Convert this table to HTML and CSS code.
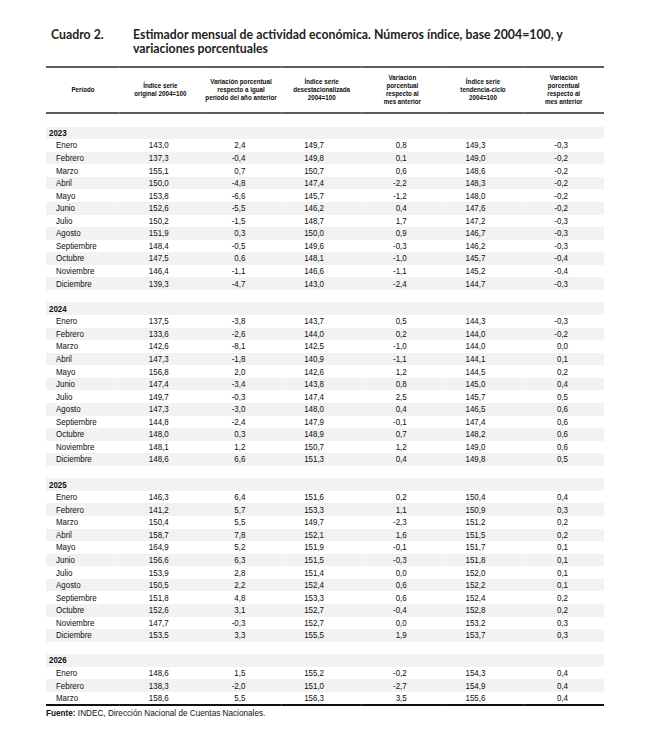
FILE: index.html
```html
<!DOCTYPE html>
<html lang="es">
<head>
    <meta charset="UTF-8">
    <meta name="viewport" content="width=device-width, initial-scale=1.0">
    <title>Cuadro 2 - EMAE</title>
    <link rel="stylesheet" href="styles.css">
</head>
<body>
    <div class="page">
        <div class="caption">
            <span class="caption-num">Cuadro 2.</span>
            <span class="caption-text">Estimador mensual de actividad económica. Números índice, base 2004=100, y<br>variaciones porcentuales</span>
        </div>

        <!-- the table is laid out wide and squeezed to mimic a narrow face -->
        <table class="emae">
            <colgroup>
                <col class="c-periodo">
                <col><col><col><col><col><col>
            </colgroup>
            <thead>
                <tr>
                    <th>Período</th>
                    <th>Índice serie<br>original 2004=100</th>
                    <th>Variación porcentual<br>respecto a igual<br>período del año anterior</th>
                    <th>Índice serie<br>desestacionalizada<br>2004=100</th>
                    <th>Variación<br>porcentual<br>respecto al<br>mes anterior</th>
                    <th>Índice serie<br>tendencia-ciclo<br>2004=100</th>
                    <th>Variación<br>porcentual<br>respecto al<br>mes anterior</th>
                </tr>
            </thead>
            <tbody>
                <!-- 2023 -->
                <tr class="spacer"><td colspan="7"></td></tr>
                <tr class="year"><td colspan="7">2023</td></tr>
                <tr><td class="mes">Enero</td><td class="num">143,0</td><td class="num">2,4</td><td class="num">149,7</td><td class="num">0,8</td><td class="num">149,3</td><td class="num">-0,3</td></tr>
                <tr class="alt"><td class="mes">Febrero</td><td class="num">137,3</td><td class="num">-0,4</td><td class="num">149,8</td><td class="num">0,1</td><td class="num">149,0</td><td class="num">-0,2</td></tr>
                <tr><td class="mes">Marzo</td><td class="num">155,1</td><td class="num">0,7</td><td class="num">150,7</td><td class="num">0,6</td><td class="num">148,6</td><td class="num">-0,2</td></tr>
                <tr class="alt"><td class="mes">Abril</td><td class="num">150,0</td><td class="num">-4,8</td><td class="num">147,4</td><td class="num">-2,2</td><td class="num">148,3</td><td class="num">-0,2</td></tr>
                <tr><td class="mes">Mayo</td><td class="num">153,8</td><td class="num">-6,6</td><td class="num">145,7</td><td class="num">-1,2</td><td class="num">148,0</td><td class="num">-0,2</td></tr>
                <tr class="alt"><td class="mes">Junio</td><td class="num">152,6</td><td class="num">-5,5</td><td class="num">146,2</td><td class="num">0,4</td><td class="num">147,6</td><td class="num">-0,2</td></tr>
                <tr><td class="mes">Julio</td><td class="num">150,2</td><td class="num">-1,5</td><td class="num">148,7</td><td class="num">1,7</td><td class="num">147,2</td><td class="num">-0,3</td></tr>
                <tr class="alt"><td class="mes">Agosto</td><td class="num">151,9</td><td class="num">0,3</td><td class="num">150,0</td><td class="num">0,9</td><td class="num">146,7</td><td class="num">-0,3</td></tr>
                <tr><td class="mes">Septiembre</td><td class="num">148,4</td><td class="num">-0,5</td><td class="num">149,6</td><td class="num">-0,3</td><td class="num">146,2</td><td class="num">-0,3</td></tr>
                <tr class="alt"><td class="mes">Octubre</td><td class="num">147,5</td><td class="num">0,6</td><td class="num">148,1</td><td class="num">-1,0</td><td class="num">145,7</td><td class="num">-0,4</td></tr>
                <tr><td class="mes">Noviembre</td><td class="num">146,4</td><td class="num">-1,1</td><td class="num">146,6</td><td class="num">-1,1</td><td class="num">145,2</td><td class="num">-0,4</td></tr>
                <tr class="alt"><td class="mes">Diciembre</td><td class="num">139,3</td><td class="num">-4,7</td><td class="num">143,0</td><td class="num">-2,4</td><td class="num">144,7</td><td class="num">-0,3</td></tr>

                <!-- 2024 -->
                <tr class="spacer"><td colspan="7"></td></tr>
                <tr class="year"><td colspan="7">2024</td></tr>
                <tr><td class="mes">Enero</td><td class="num">137,5</td><td class="num">-3,8</td><td class="num">143,7</td><td class="num">0,5</td><td class="num">144,3</td><td class="num">-0,3</td></tr>
                <tr class="alt"><td class="mes">Febrero</td><td class="num">133,6</td><td class="num">-2,6</td><td class="num">144,0</td><td class="num">0,2</td><td class="num">144,0</td><td class="num">-0,2</td></tr>
                <tr><td class="mes">Marzo</td><td class="num">142,6</td><td class="num">-8,1</td><td class="num">142,5</td><td class="num">-1,0</td><td class="num">144,0</td><td class="num">0,0</td></tr>
                <tr class="alt"><td class="mes">Abril</td><td class="num">147,3</td><td class="num">-1,8</td><td class="num">140,9</td><td class="num">-1,1</td><td class="num">144,1</td><td class="num">0,1</td></tr>
                <tr><td class="mes">Mayo</td><td class="num">156,8</td><td class="num">2,0</td><td class="num">142,6</td><td class="num">1,2</td><td class="num">144,5</td><td class="num">0,2</td></tr>
                <tr class="alt"><td class="mes">Junio</td><td class="num">147,4</td><td class="num">-3,4</td><td class="num">143,8</td><td class="num">0,8</td><td class="num">145,0</td><td class="num">0,4</td></tr>
                <tr><td class="mes">Julio</td><td class="num">149,7</td><td class="num">-0,3</td><td class="num">147,4</td><td class="num">2,5</td><td class="num">145,7</td><td class="num">0,5</td></tr>
                <tr class="alt"><td class="mes">Agosto</td><td class="num">147,3</td><td class="num">-3,0</td><td class="num">148,0</td><td class="num">0,4</td><td class="num">146,5</td><td class="num">0,6</td></tr>
                <tr><td class="mes">Septiembre</td><td class="num">144,8</td><td class="num">-2,4</td><td class="num">147,9</td><td class="num">-0,1</td><td class="num">147,4</td><td class="num">0,6</td></tr>
                <tr class="alt"><td class="mes">Octubre</td><td class="num">148,0</td><td class="num">0,3</td><td class="num">148,9</td><td class="num">0,7</td><td class="num">148,2</td><td class="num">0,6</td></tr>
                <tr><td class="mes">Noviembre</td><td class="num">148,1</td><td class="num">1,2</td><td class="num">150,7</td><td class="num">1,2</td><td class="num">149,0</td><td class="num">0,6</td></tr>
                <tr class="alt"><td class="mes">Diciembre</td><td class="num">148,6</td><td class="num">6,6</td><td class="num">151,3</td><td class="num">0,4</td><td class="num">149,8</td><td class="num">0,5</td></tr>

                <!-- 2025 -->
                <tr class="spacer"><td colspan="7"></td></tr>
                <tr class="year"><td colspan="7">2025</td></tr>
                <tr><td class="mes">Enero</td><td class="num">146,3</td><td class="num">6,4</td><td class="num">151,6</td><td class="num">0,2</td><td class="num">150,4</td><td class="num">0,4</td></tr>
                <tr class="alt"><td class="mes">Febrero</td><td class="num">141,2</td><td class="num">5,7</td><td class="num">153,3</td><td class="num">1,1</td><td class="num">150,9</td><td class="num">0,3</td></tr>
                <tr><td class="mes">Marzo</td><td class="num">150,4</td><td class="num">5,5</td><td class="num">149,7</td><td class="num">-2,3</td><td class="num">151,2</td><td class="num">0,2</td></tr>
                <tr class="alt"><td class="mes">Abril</td><td class="num">158,7</td><td class="num">7,8</td><td class="num">152,1</td><td class="num">1,6</td><td class="num">151,5</td><td class="num">0,2</td></tr>
                <tr><td class="mes">Mayo</td><td class="num">164,9</td><td class="num">5,2</td><td class="num">151,9</td><td class="num">-0,1</td><td class="num">151,7</td><td class="num">0,1</td></tr>
                <tr class="alt"><td class="mes">Junio</td><td class="num">156,6</td><td class="num">6,3</td><td class="num">151,5</td><td class="num">-0,3</td><td class="num">151,8</td><td class="num">0,1</td></tr>
                <tr><td class="mes">Julio</td><td class="num">153,9</td><td class="num">2,8</td><td class="num">151,4</td><td class="num">0,0</td><td class="num">152,0</td><td class="num">0,1</td></tr>
                <tr class="alt"><td class="mes">Agosto</td><td class="num">150,5</td><td class="num">2,2</td><td class="num">152,4</td><td class="num">0,6</td><td class="num">152,2</td><td class="num">0,1</td></tr>
                <tr><td class="mes">Septiembre</td><td class="num">151,8</td><td class="num">4,8</td><td class="num">153,3</td><td class="num">0,6</td><td class="num">152,4</td><td class="num">0,2</td></tr>
                <tr class="alt"><td class="mes">Octubre</td><td class="num">152,6</td><td class="num">3,1</td><td class="num">152,7</td><td class="num">-0,4</td><td class="num">152,8</td><td class="num">0,2</td></tr>
                <tr><td class="mes">Noviembre</td><td class="num">147,7</td><td class="num">-0,3</td><td class="num">152,7</td><td class="num">0,0</td><td class="num">153,2</td><td class="num">0,3</td></tr>
                <tr class="alt"><td class="mes">Diciembre</td><td class="num">153,5</td><td class="num">3,3</td><td class="num">155,5</td><td class="num">1,9</td><td class="num">153,7</td><td class="num">0,3</td></tr>

                <!-- 2026 -->
                <tr class="spacer"><td colspan="7"></td></tr>
                <tr class="year"><td colspan="7">2026</td></tr>
                <tr><td class="mes">Enero</td><td class="num">148,6</td><td class="num">1,5</td><td class="num">155,2</td><td class="num">-0,2</td><td class="num">154,3</td><td class="num">0,4</td></tr>
                <tr class="alt"><td class="mes">Febrero</td><td class="num">138,3</td><td class="num">-2,0</td><td class="num">151,0</td><td class="num">-2,7</td><td class="num">154,9</td><td class="num">0,4</td></tr>
                <tr class="last"><td class="mes">Marzo</td><td class="num">158,6</td><td class="num">5,5</td><td class="num">156,3</td><td class="num">3,5</td><td class="num">155,6</td><td class="num">0,4</td></tr>
            </tbody>
        </table>

        <p class="source"><b>Fuente:</b> INDEC, Dirección Nacional de Cuentas Nacionales.</p>
    </div>
</body>
</html>
```

FILE: styles.css
```css
body {
    margin: 0;
    background: #fff;
    color: #111;
}
.page {
    width: 558px;
    padding: 28px 0 0 46px;
    overflow: hidden;
}
.caption {
    display: flex;
    font-family: Lato, "Open Sans", sans-serif;
    font-weight: 700;
    font-size: 12.3px;
    line-height: 14px;
    color: #222;
}
.caption-num {
    width: 82px;
    padding-left: 5px;
    flex-shrink: 0;
}
/* 680.5px wide, scaled to 558px (0.82) */
.emae {
    width: 680.5px;
    margin-top: 10px;
    border-collapse: collapse;
    table-layout: fixed;
    font-family: "Liberation Sans", Arial, sans-serif;
    font-size: 9.7px;
    color: #0d0d0d;
    transform: scaleX(0.82);
    transform-origin: 0 0;
}
.c-periodo {
    width: 90.25px;
}
.emae thead th {
    height: 44px;
    padding: 0;
    border-top: 2px solid #5e5e5e;
    border-bottom: 2px solid #5e5e5e;
    font-size: 7.6px;
    line-height: 7.8px;
    font-weight: 700;
    text-align: center;
    vertical-align: middle;
}
.emae td {
    height: 12.57px;
    padding: 0;
    line-height: 12px;
    white-space: nowrap;
}
.emae tr.alt td,
.emae tr.year td {
    background: #f2f2f2;
}
.emae tr.year td {
    padding-left: 3.7px;
    font-weight: 700;
}
.emae td.mes {
    padding-left: 12.2px;
}
.emae td.num {
    text-align: right;
    padding-right: 46.3px;
}
.emae td.num:nth-child(odd) {
    padding-right: 43.9px;
}
.emae td.num:nth-child(2) {
    padding-right: 39px;
}
.emae tr.last td {
    border-bottom: 2px solid #111;
}
.source {
    margin: 3px 0 0;
    font-family: "Liberation Sans", Arial, sans-serif;
    font-size: 8.2px;
    line-height: 10px;
}
```
